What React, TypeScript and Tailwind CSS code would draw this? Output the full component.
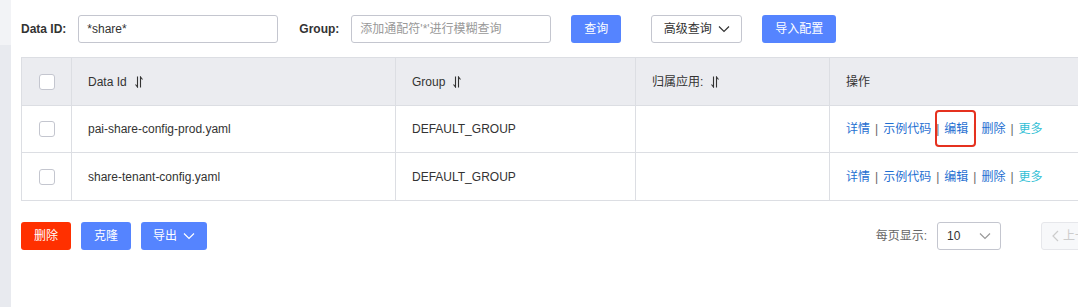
import React from "react";

const font = { fontFamily: '"Liberation Sans", "Noto Sans CJK SC", sans-serif' };

function SortIcon() {
  return (
    <svg width="8" height="12" viewBox="0 0 8 12" className="ml-2 text-[#333]" fill="none" stroke="currentColor" strokeWidth="1.1">
      <path d="M2.5 0.5 V11 L0.5 8.5" />
      <path d="M5.5 11.5 V1 L7.5 3.5" />
    </svg>
  );
}

function Chevron({ className = "" }: { className?: string }) {
  return (
    <svg width="12" height="8" viewBox="0 0 12 8" fill="none" stroke="currentColor" strokeWidth="1.2" className={className}>
      <path d="M1 1.5 L6 6.5 L11 1.5" />
    </svg>
  );
}

function Checkbox() {
  return <span className="block w-4 h-4 rounded-[3px] border border-[#c4c6cf] bg-white" />;
}

function Sep() {
  return <span className="mx-[5px] text-[#666]">|</span>;
}

const rows = [
  { id: "pai-share-config-prod.yaml", group: "DEFAULT_GROUP", highlight: true },
  { id: "share-tenant-config.yaml", group: "DEFAULT_GROUP", highlight: false },
];

export default function App() {
  return (
    <div className="flex w-[1078px] h-[307px] overflow-hidden bg-white text-[12px] text-[#333]" style={font}>
      <div className="w-[11px] shrink-0 flex flex-col bg-[#e8eaef]">
        <div className="h-[45px] bg-[#f2f3f6]" />
      </div>

      <div className="flex-1 pl-[10px] pt-[15px] min-w-0">
        {/* search bar */}
        <div className="flex items-center h-7">
          <span className="font-bold text-[#333] mr-3">Data ID:</span>
          <div className="w-[200px] h-7 border border-[#c4c6cf] rounded-[3px] flex items-center px-2">*share*</div>
          <span className="font-bold text-[#333] ml-[21px] mr-3">Group:</span>
          <div className="w-[200px] h-7 border border-[#c4c6cf] rounded-[3px] flex items-center px-2 text-[#999]">
            添加通配符'*'进行模糊查询
          </div>
          <button className="ml-[20px] w-[50px] h-7 rounded-[3px] bg-[#5584ff] text-white">查询</button>
          <button className="ml-[30px] w-[91px] h-7 rounded-[3px] border border-[#c4c6cf] bg-white flex items-center justify-center gap-1.5 text-[#333]">
            高级查询
            <Chevron className="text-[#333]" />
          </button>
          <button className="ml-[20px] w-[74px] h-7 rounded-[3px] bg-[#5584ff] text-white">导入配置</button>
        </div>

        {/* table */}
        <div className="mt-[14px] w-[1100px] border border-[#dcdee3] border-r-0">
          <div className="flex h-[48px] bg-[#ebecf0] border-b border-[#dcdee3]">
            <div className="w-[50px] shrink-0 flex items-center justify-center border-r border-[#dcdee3]">
              <Checkbox />
            </div>
            <div className="w-[324px] shrink-0 flex items-center px-4 border-r border-[#dcdee3]">
              Data Id<SortIcon />
            </div>
            <div className="w-[240px] shrink-0 flex items-center px-4 border-r border-[#dcdee3]">
              Group<SortIcon />
            </div>
            <div className="w-[194px] shrink-0 flex items-center px-4 border-r border-[#dcdee3]">
              归属应用:<SortIcon />
            </div>
            <div className="flex-1 flex items-center px-4">操作</div>
          </div>
          {rows.map((r, i) => (
            <div key={r.id} className={`flex h-[47px] ${i === 0 ? "border-b border-[#dcdee3]" : ""}`}>
              <div className="w-[50px] shrink-0 flex items-center justify-center border-r border-[#dcdee3]">
                <Checkbox />
              </div>
              <div className="w-[324px] shrink-0 flex items-center px-4 border-r border-[#dcdee3]">{r.id}</div>
              <div className="w-[240px] shrink-0 flex items-center px-4 border-r border-[#dcdee3]">{r.group}</div>
              <div className="w-[194px] shrink-0 border-r border-[#dcdee3]" />
              <div className="flex-1 flex items-center px-4 text-[#1f6fd1]">
                <span>详情</span>
                <Sep />
                <span>示例代码</span>
                <Sep />
                <span className="relative">
                  编辑
                  {r.highlight && (
                    <span className="absolute -left-[9px] -right-[8px] -top-[10px] -bottom-[9px] border-2 border-[#e5311f] rounded-[4px]" />
                  )}
                </span>
                <Sep />
                <span>删除</span>
                <Sep />
                <span className="text-[#33bfd6]">更多</span>
              </div>
            </div>
          ))}
        </div>

        {/* footer */}
        <div className="mt-[21px] flex items-center h-7">
          <button className="w-[50px] h-7 rounded-[3px] bg-[#ff3000] text-white">删除</button>
          <button className="ml-[10px] w-[50px] h-7 rounded-[3px] bg-[#5584ff] text-white">克隆</button>
          <button className="ml-[10px] w-[66px] h-7 rounded-[3px] bg-[#5584ff] text-white flex items-center justify-center gap-1.5">
            导出
            <Chevron className="text-white" />
          </button>
          <div className="ml-auto flex items-center">
            <span className="text-[#666] mr-[10px]">每页显示:</span>
            <div className="w-[64px] h-7 border border-[#c4c6cf] rounded-[3px] flex items-center justify-between px-[9px] text-[#333]">
              10
              <Chevron className="text-[#999]" />
            </div>
            <div className="ml-[40px] w-[60px] -mr-[23px] h-7 rounded-[3px] border border-[#e6e7eb] bg-[#f7f8fa] flex items-center pl-[10px] text-[#ccc] gap-1">
              <svg width="7" height="12" viewBox="0 0 7 12" fill="none" stroke="currentColor" strokeWidth="1.2">
                <path d="M6 1 L1 6 L6 11" />
              </svg>
              上一页
            </div>
          </div>
        </div>
      </div>
    </div>
  );
}
